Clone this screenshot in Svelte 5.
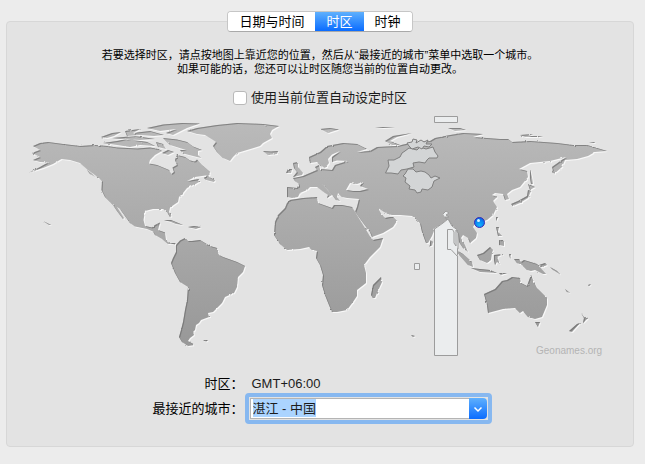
<script lang="ts">
  const tabs = ["日期与时间", "时区", "时钟"];
  let current = $state("时区");
  let auto = $state(false);
  let city = $state("湛江 - 中国");
  let cityInput: HTMLInputElement;

  $effect(() => {
    cityInput.focus();
    cityInput.select();
  });

  const continents = [
    // north america
    "M33 146 40 143 48 142 63 144 80 146 95 145 107 146 117 147.5 137 148.5 150 147.5 158 149 162 151 155 155 150 160 149 163.5 157 165 163 167.5 169 170 171.5 174 174 172 172.5 167.5 177 165 175 160 177 155 185 157 190 160.5 195 161.5 197 159.5 202 165 210 172 209 175 202 176 195 177 187 181 199 179 197 183 193 185 187 188 183 193 179 197 178 202 170 207.5 169 212 171.5 216 170 217 167 212 163 209 153 209 145 211 143.5 220 145 226 152 227.5 155 225 160 222.5 158 230 165 232.5 166 240 169 243 175 243 176 245 171 243.5 168 244 162 239 155 235 153 231.5 147 229 135 226.5 130 223 120 209 117 207 124 218 123 219 117 211 113 205 110 202 105 197 101.5 190 102 181 100 179 95 175 88 170 80 163 70 160 61.5 159 53 164 43 168 30 172 40 167 48 162.5 40 162 33 160 40 157 32 153 40 150Z",
    // south america
    "M180 240.5 185 238 188 241 192 241 200 240 210 246 217 248 219 255 223 257 237 262 245 266 243 272 238 277 237 287 234 293 225 297 222 303 213 312 208 313 209 317 201 320 199 323 196 325 195 330 193 332 194 335 190 338 188 341 195 345 188 346 182 342 179 337 181 330 183 322 185 310 187 300 188 287 180 282 175 273 171 263 173 258 176 252 176 245Z",
    // greenland, iceland
    "M187 131 197 128 217 125 237 123 263 124 279 126 272 130 270 134 272 138 263 143 260 146 247 150 237 153 233 157 230 161 223 158 217 152 213 146 216 142 213 140 205 135 197 134Z M263 151 271 151.5 278 151 277 154 268 155Z",
    // africa, madagascar
    "M290 200 303 198 317 197 318 203 332 208 334 205 342 205 352 207 354 210 360 220 365 228 371 238 373 240 383 238 380 247 370 257 364 265 366 273 366 283 357 290 357 296 353 302 347 310 337 312 332 312 329 305 325 295 322 285 323 275 320 265 316 258 317 251 312 250 309 247 300 249 287 250 280 244 274 235 275 222 278 215 285 208 287 203Z M381 277 382 282 377 293 375 298 373 298 371 295 373 285 377 281Z",
    // eurasia
    "M287 187 297 188 299 184 295 181 293 178 303 176 310 173 317 170 315 167 319 165 320 169 332 170 335 165 348 161 337 160.5 332 162 332 157 340 151 332 154.5 328 159 329 163 325 168 320 165 317 162 310 163 309 157 320 152 327 146 343 143 357 144 367 149 357 152 370 151 377 147 397 146 410 143 430 141 435 138 450 135 463 133 483 134 473 137 500 139 508 139 512 142 530 141 557 143 573 145 587 145 607 151 595 152 588 156 577 159 565 160 562 167 554 174 552 167 566 157 550 161 530 163 519 169 527 171 528 177 520 187 512 190 507 194 509 199 505 200 503 194 495 193 492 195 497 197 493 201 497 207 493 215 487 220 475 224 473 227 477 233 476 238 470 243 468 238 463 235 461 238 465 245 468 252 463 248 459 242 458 233 455 228 452 225 448 219 443 223 435 228 432 236 428 243 426 243 422 232 420 223 417 220 412 216 400 215 392 215 388 214 384 212 378 208 382 215 385 218 390 217 393 217 397 221 393 227 383 233 372 237 370 232 355 212 357 207 359 199 347 198 342 197 338 193 337 197 340 201 336 200 333 196 328 190 322 184 332 195 327 198 328 195 325 193 317 187 310 187 307 190 300 193 298 197 292 198 287 197Z M346 190 353 191 360 191 368 189 360 186 363 182 357 184 350 183Z",
    // australia, tasmania, new zealand
    "M484 294 495 289 502 281 507 280 512 277 520 278 521 283 527 286 531 275 534 282 537 288 547 298 547 305 542 317 535 319 528 317 523 311 520 313 515 308 503 309 488 313 487 305Z M535 322 540 322 538 327Z M581 313 584 317 588 318 583 323 584 318Z M580 323 572 332 569 331 577 324Z",
  ];

  const islands = [
    // canadian arctic
    "M163 138 177 139.5 187 142 193 146.5 202 150 198 151 198 155 201 158 193 156 183 153.5 180 150 186 150 170 145Z M103 143 117 141 127 139 147 142 155 146 140 145 130 147 117 145Z M147 128 163 124.5 182 123 200 123.5 187 128 173 135 166 133 176 129 160 131Z M101 137 112 133 121 132 114 136 107 138Z M125 131 140 129 133 133 150 131 164 135 154 136 140 135 127 136Z M112 138 135 136 155 139 140 140 120 139Z M156 142 163 144 166 149 158 147Z M162 153 168 150 174 152 168 155Z",
    // britain and ireland
    "M293 163 298 162 298 167 303 173 302 175 293 177 297 172 294 168Z M286 173 288 169 292 169 291 173Z",
    "M320 129 330 128 339 129.5 328 133Z M385 141 393 136 412 133 397 137 390 141 400 145 392 145Z M375 127 395 127 383 128Z M448 128 460 128 466 130 455 131Z M520 135 533 134 528 136 543 136 538 137 525 137Z M589 142 595 142 594 143Z",
    // japan, sakhalin
    "M511 204 518 201 527 196 528 190 531 191 528 198 520 203 513 206Z M528 184 535 187 530 190Z M530 169 532 177 533 184 531 184 530 178Z",
    // south east asia
    "M496 217 498 217 496 221Z M496 227 499 227 498 232 502 236 498 236Z M499 240 504 241 504 246 499 245Z M477 255 483 253 490 247 493 250 492 253 491 260 487 263 480 260Z M453 248 463 254 472 262 473 267 468 265 461 257Z M471 268 480 269 490 270 497 273 480 272Z M494 255 503 254 497 257 500 264 497 262 495 265 494 260Z M509 254 511 254 510 258Z M514 259 519 259 521 262 524 260 537 264 546 274 543 274 535 270 531 271 527 270 522 265 517 263Z M539 265 545 263 547 265 543 267Z M499 273 507 273 501 275Z M550 267 557 271 561 275 553 270Z M565 289 570 293 567 292Z M588 285 591 284 589 286Z M430 240 433 242 432 246 430 245Z",
    // caribbean, alaska, newfoundland
    "M164 220 171 220 183 225 176 224 171 222Z M188 227 194 226 201 227 196 229Z M204 178 208 174 209 177 215 180 214 182 206 180Z M87 170 92 174 95 177 90 174Z M43 221 51 225 49 225Z M203 340 208 340 206 341.5Z M411 335 415 336 413 337Z M191 181 201 181 195 184Z",
  ];

  const selected = [
    "M385.5 173 389 166 388 160 394 160 400 157 402 153 405 151 409 148 417 150 420 147 426 149 433 147 435 152 438 156 437 158 429 158 427 160 425 163 419 162 413 163 414 167 407 169 401 170 398 174 391 173Z",
    "M407 143 412 142 413 139 417 140 416 143 421 140 424 142 428 140 426 144 432 144 429 147 424 146 422 149 418 147 412 149 409 146Z",
    "M408 169 413 169 416 172 421 171 425 172 429 175 431 178 435 176 440 178 434 181 432 187 428 190 422 189 421 192 417 193 415 190 409 189 410 186 405 182 406 178 403 176 405 174Z",
    "M434.5 229 443 223 448 219 452 226 457.5 230V355.5H434.5Z",
    "M434.5 116.5H457.5V122.5H434.5Z",
    "M414.5 263.5H419.5V269.5H414.5Z",
  ];
</script>

<main>
  <div class="tabs" role="tablist">
    {#each tabs as tab}
      <button role="tab" aria-selected={tab === current} class:active={tab === current} onclick={() => (current = tab)}>{tab}</button>
    {/each}
  </div>

  <section class="panel">
    <p class="hint">
      若要选择时区，请点按地图上靠近您的位置，然后从“最接近的城市”菜单中选取一个城市。<br />
      如果可能的话，您还可以让时区随您当前的位置自动更改。
    </p>

    <label class="auto">
      <input type="checkbox" bind:checked={auto} />
      使用当前位置自动设定时区
    </label>

    <svg class="map" viewBox="7 110 626 256" role="img" aria-label="世界地图">
      <defs>
        <linearGradient id="land" gradientUnits="userSpaceOnUse" x1="0" y1="122" x2="0" y2="346">
          <stop offset="0" stop-color="#bababa" />
          <stop offset="1" stop-color="#989898" />
        </linearGradient>
        <radialGradient id="pin" cx="0.5" cy="0.75" r="0.7">
          <stop offset="0" stop-color="#10b4ff" />
          <stop offset="1" stop-color="#0767e8" />
        </radialGradient>
        <!-- rough coastline, dark upper edge and light lower edge -->
        <filter id="relief" filterUnits="userSpaceOnUse" x="7" y="110" width="626" height="256" color-interpolation-filters="sRGB">
          <feTurbulence type="fractalNoise" baseFrequency="0.25" numOctaves="2" seed="4" result="noise" />
          <feDisplacementMap in="SourceGraphic" in2="noise" scale="2" xChannelSelector="R" yChannelSelector="G" result="shape" />
          <feOffset in="shape" dx="1" dy="1" result="low" />
          <feFlood flood-color="#f8f8f8" />
          <feComposite in2="low" operator="in" result="light" />
          <feFlood flood-color="#6c6c6c" flood-opacity="0.7" />
          <feComposite in2="shape" operator="in" />
          <feComposite in2="low" operator="out" result="dark" />
          <feMerge>
            <feMergeNode in="light" />
            <feMergeNode in="shape" />
            <feMergeNode in="dark" />
          </feMerge>
        </filter>
      </defs>
      <g filter="url(#relief)" fill="url(#land)" fill-rule="evenodd">
        {#each [...continents, ...islands] as d}
          <path {d} />
        {/each}
      </g>
      <g class="zone">
        {#each selected as d, i}
          <path {d} class:sea={i > 2} />
        {/each}
        <path class="sea" d="M447.5 229.5H452.5L454 232V243L456 246V230L458 233V249M447.5 229.5V249.5H451L458 257" />
        <path class="sea" d="M443 214 446 211 449 213 446 215 449 217 445 217 447 220" />
      </g>
      <text x="536" y="354">Geonames.org</text>
      <circle class="pin" cx="479.5" cy="222.5" r="5" />
      <circle cx="478.5" cy="220.5" r="1.5" fill="#d8f4ff" />
    </svg>

    <div class="form">
      <span class="name">时区：</span>
      <output>GMT+06:00</output>
      <label class="name" for="city">最接近的城市：</label>
      <div class="combo">
        <input id="city" type="text" autocomplete="off" bind:value={city} bind:this={cityInput} />
        <button aria-label="显示城市">
          <svg viewBox="0 0 18 20"><path d="M5.5 8.5 9 12 12.5 8.5" /></svg>
        </button>
      </div>
    </div>
  </section>
</main>

<style>
  :global(body) {
    background: #ececec;
  }

  main {
    padding: 11px 11px 17px 6px;
    font: 13px/18px "Liberation Sans", "Noto Sans CJK SC", sans-serif;
    color: #1c1c1c;
  }

  button, input {
    font: inherit;
    color: inherit;
    margin: 0;
    padding: 0;
    border: 0;
  }

  .tabs {
    display: flex;
    position: relative;
    width: fit-content;
    margin: 0 auto;
    border-radius: 4px;
    overflow: hidden;
    border: 1px solid #c6c6c6;
    border-bottom-color: #a9a9a9;
    background: #fff;
  }

  .tabs button {
    height: 19px;
    padding: 0 11px;
    background: #fff;
    color: #000;
  }

  .tabs button.active {
    background: linear-gradient(#5fb0fd, #0a6cff);
    color: #fff;
  }

  .panel {
    margin-top: -11px;
    padding: 26px 0 22px;
    background: #e3e3e3;
    border: 1px solid #d7d7d7;
    border-radius: 4px;
  }

  .hint {
    margin: 0;
    font-size: 11px;
    line-height: 14px;
    text-align: center;
    color: #000;
  }

  .auto {
    display: flex;
    justify-content: center;
    align-items: center;
    gap: 4px;
    height: 18px;
    margin: 13px 0 3px;
  }

  .auto input {
    appearance: none;
    width: 14px;
    height: 14px;
    background: #fff;
    border: 1px solid #b9b9b9;
    border-radius: 3px;
  }

  .auto input:checked {
    background: #2a86ff;
  }

  .map {
    display: block;
    width: 100%;
  }

  .map text {
    font-size: 10px;
    fill: #b4b4b4;
  }

  .zone path {
    fill: #d3d5d6;
    stroke: #808080;
  }

  .zone .sea {
    fill: #ebedee;
    stroke: #9c9c9c;
  }

  .pin {
    fill: url(#pin);
    stroke: #3a2cb4;
  }

  .form {
    display: grid;
    grid-template-columns: auto auto;
    justify-content: center;
    align-items: center;
    column-gap: 1px;
    padding: 9px 0 0 4px;
  }

  .name {
    text-align: right;
    color: #000;
  }

  output {
    padding-left: 7px;
  }

  .combo {
    display: flex;
    width: 237px;
    padding: 1px;
    border: 4px solid #87b8f0;
    border-radius: 4px;
  }

  .combo input {
    box-sizing: border-box;
    flex: 1;
    min-width: 0;
    height: 21px;
    padding: 0 0 2px 2px;
    background: #fff;
    border: 1px solid #b4b4b4;
    border-right: 0;
    outline: 0;
  }

  .combo input::selection {
    background: #abd4ff;
    color: #1c1c1c;
  }

  .combo button {
    width: 18px;
    height: 21px;
    background: linear-gradient(#5fb0fd, #0a6cff);
    border-radius: 0 4px 4px 0;
  }

  .combo svg {
    display: block;
    fill: none;
    stroke: #fff;
    stroke-width: 1.5;
  }
</style>
